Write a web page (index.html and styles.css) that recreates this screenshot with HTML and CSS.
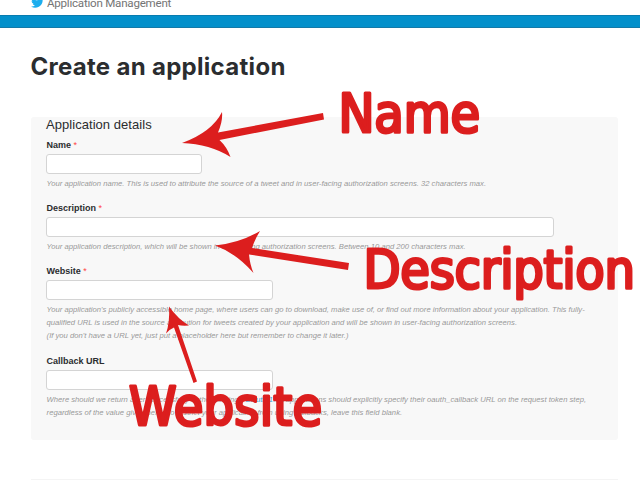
FILE: index.html
```
<!DOCTYPE html>
<html lang="en">
<head>
<meta charset="utf-8">
<title>Application Management</title>
<link rel="stylesheet" href="styles.css">
</head>
<body>
<header class="topbar">
  <svg class="bird" viewBox="0 0 24 20" aria-hidden="true"><path d="M24 2.4a10 10 0 0 1-2.8.8A5 5 0 0 0 23.3.5a10 10 0 0 1-3.1 1.2A4.9 4.9 0 0 0 11.8 6.200Q5.600 5.900 1.700 1A4.900 4.900 0 0 0 3.200 7.600Q2 7.500 1 7A4.900 4.900 0 0 0 4.900 11.900Q3.800 12.200 2.700 12A4.900 4.900 0 0 0 7.300 15.400A9.900 9.900 0 0 1 0 17.400A14 14 0 0 0 21.500 4.900A10 10 0 0 0 24 2.400Z"/></svg>
  <span class="brand">Application Management</span>
</header>
<div class="band"></div>
<main class="page">
  <h1 class="title">Create an application</h1>
  <form class="panel">
    <h2 class="legend">Application details</h2>
    <div class="field">
      <label class="label" for="name">Name <span class="req">*</span></label>
      <input class="input short" id="name">
      <p class="help">Your application name. This is used to attribute the source of a tweet and in user-facing authorization screens. 32 characters max.</p>
    </div>
    <div class="field">
      <label class="label" for="desc">Description <span class="req">*</span></label>
      <input class="input wide" id="desc">
      <p class="help">Your application description, which will be shown in user-facing authorization screens. Between 10 and 200 characters max.</p>
    </div>
    <div class="field website">
      <label class="label" for="site">Website <span class="req">*</span></label>
      <input class="input" id="site">
      <p class="help">Your application's publicly accessible home page, where users can go to download, make use of, or find out more information about your application. This fully-<br>qualified URL is used in the source attribution for tweets created by your application and will be shown in user-facing authorization screens.<br>(If you don't have a URL yet, just put a placeholder here but remember to change it later.)</p>
    </div>
    <div class="field">
      <label class="label" for="callback">Callback URL</label>
      <input class="input" id="callback">
      <p class="help">Where should we return after successfully authenticating? <span class="link">OAuth 1.0a</span> applications should explicitly specify their oauth_callback URL on the request token step,<br>regardless of the value given here. To restrict your application from using callbacks, leave this field blank.</p>
    </div>
  </form>
  <div class="next"></div>
</main>
<svg class="notes" viewBox="0 0 640 480">
  <path d="M182 143Q212 132 222 112Q223 121 218 132.500L323 113L324 119.500L219.500 140Q227 147 230.500 157Q210 144 182 143Z"/>
  <path d="M215 245.500Q240 243 260 231Q255 239 252 248L349 263L348 270L249 254.500Q250 265 253.500 273Q236 253 215 245.500Z"/>
  <path d="M169 306.500Q178 319 189 325.500Q182 326 178 325L197 381.500L193.500 383L174 327.500Q170 329 166 333.500Q170 322 169 306.500Z"/>
  <text x="338.500" y="132" textLength="141.500">Name</text>
  <text x="363.500" y="287.500" textLength="271.500">Description</text>
  <text x="129" y="424.500" textLength="193">Website</text>
</svg>
</body>
</html>
```
FILE: styles.css
```
* { box-sizing: border-box; }
body {
  margin: 0;
  width: 640px;
  height: 480px;
  overflow: hidden;
  position: relative;
  background: #fff;
  color: #2b2d2f;
  font-family: "Liberation Sans", Arial, sans-serif;
}
.topbar {
  height: 15px;
  padding-left: 31px;
  display: flex;
  gap: 3px;
  align-items: flex-start;
  overflow: hidden;
}
.bird { width: 13px; height: 11px; margin-top: -3px; fill: #1daeee; flex: none; }
.brand {
  font: 11.6px/14px Roboto, sans-serif;
  letter-spacing: -0.24px;
  margin-top: -4px;
  color: #747474;
  white-space: nowrap;
}
.band {
  height: 13px;
  background: #0390cb;
  border-top: 1px solid #087caf;
  border-bottom: 1px solid #147aa8;
}
.page { padding: 0 22px 0 31px; }
.title {
  margin: 0 0 0 -0.6px;
  height: 89px;
  padding-top: 23px;
  font: 650 24px/32px Inter, sans-serif;
  letter-spacing: 0.3px;
  white-space: nowrap;
}
.panel {
  height: 323px;
  padding: 0 15px;
  background: #f8f8f8;
  border-radius: 3px;
}
.legend { margin: 0; font-size: 13px; font-weight: 400; line-height: 16px; letter-spacing: 0.05px; }
.field { height: 63px; padding-top: 6px; }
.website { height: 90px; }
.label { display: block; padding-left: 0.5px; font-size: 9px; font-weight: 700; line-height: 13px; height: 15px; }
.req { color: #f44; font-weight: 400; }
.input {
  display: block;
  width: 227px;
  height: 20px;
  border: 1px solid #d4d4d4;
  border-radius: 3px;
  background: #fff;
  padding: 0 4px;
}
.short { width: 156px; }
.wide { width: 508px; }
.help {
  margin: 3px 0 0 0.6px;
  font-size: 7.66px;
  line-height: 13px;
  font-style: italic;
  color: #999;
  white-space: nowrap;
}
.link { color: #3ba5da; }
.next { margin-top: 39px; height: 1px; background: #f4f4f4; }
.notes { position: absolute; inset: 0; width: 640px; height: 480px; fill: #dc1e1e; }
.notes text {
  font: 53.5px "DejaVu Sans Condensed", "DejaVu Sans", sans-serif;
  font-stretch: condensed;
  stroke: #dc1e1e;
  stroke-width: 3px;
  stroke-linejoin: round;
}
```
